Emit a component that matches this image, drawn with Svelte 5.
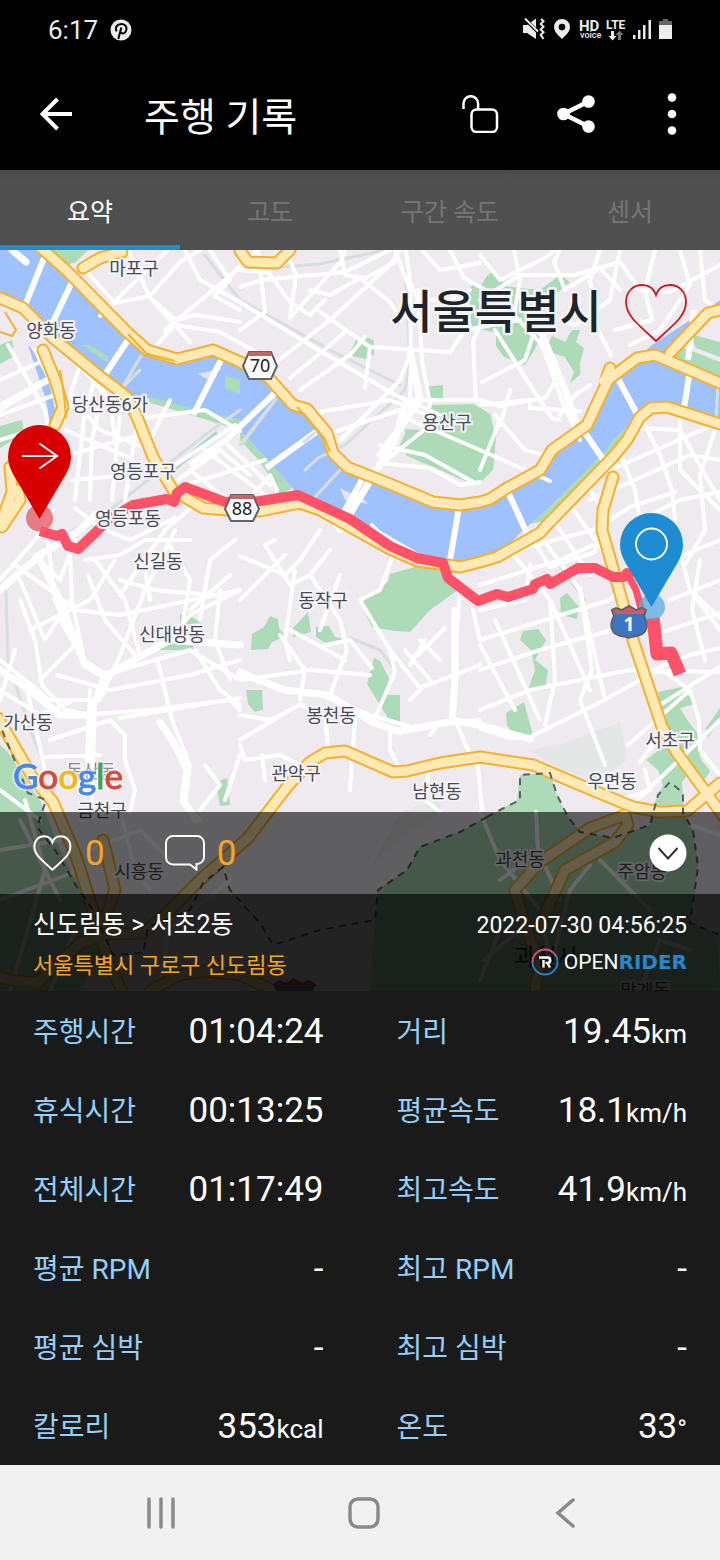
<script>
  const tabs = ['요약', '고도', '구간 속도', '센서'];
  let active = $state(0);

  const stats = [
    ['주행시간', '01:04:24', ''], ['거리', '19.45', 'km'],
    ['휴식시간', '00:13:25', ''], ['평균속도', '18.1', 'km/h'],
    ['전체시간', '01:17:49', ''], ['최고속도', '41.9', 'km/h'],
    ['평균 RPM', '-', ''], ['최고 RPM', '-', ''],
    ['평균 심박', '-', ''], ['최고 심박', '-', ''],
    ['칼로리', '353', 'kcal'], ['온도', '33', '°']
  ];

  const heart = 'M31 57C27 53 15 43 8 35C3 29 1 24 1 18C1 8 8 1 17 1C24 1 29 5 31 11C33 5 38 1 45 1C54 1 61 8 61 18C61 24 59 29 54 35C47 43 35 53 31 57Z';

  const places = [
    ['마포구', 134, 275], ['양화동', 51, 337], ['당산동6가', 110, 411], ['영등포구', 143, 478],
    ['영등포동', 128, 525], ['신길동', 158, 568], ['신대방동', 172, 641], ['동작구', 323, 607],
    ['용산구', 447, 429], ['봉천동', 331, 722], ['관악구', 296, 780], ['남현동', 437, 798],
    ['가산동', 28, 729], ['서초구', 670, 747], ['우면동', 612, 788], ['금천구', 102, 817],
    ['시흥동', 139, 878], ['과천동', 520, 866], ['주암동', 642, 878], ['막계동', 645, 997]
  ];

  const parks = [
    'M26 250H88L76 262L58 268ZM0 345L12 340L14 356L0 364ZM0 426L22 420L24 434L0 448Z',
    'M82 345L108 357L110 363L84 350ZM148 397L240 419V428L150 402ZM174 465L216 431L219 435L176 470Z',
    'M240 431L268 460L292 488L280 495L266 468L240 440Z',
    'M350 352L356 340L367 337L374 341L374 354L366 359L352 356ZM425 387L443 385V400L427 397Z',
    'M431 405L474 404L490 414L496 438L493 470L481 482L465 481L440 470L407 456L400 445L405 434L405 429L432 431Z',
    'M467 292L474 283L480 288L486 277L494 270L502 280L505 286L520 288L540 290L560 275L570 282L558 292L545 303L543 330L535 349L525 365L504 357L496 346L496 333L472 327Z',
    'M548 345L552 336L565 342L572 330L580 330L576 342L584 348L580 363L580 375L570 383L574 372L565 357L550 352Z',
    'M690 334L720 342V357L696 348ZM664 356L684 348L720 362V382Z',
    'M640 414L613 440L605 459L560 498L530 520L498 540L530 505L580 474Z',
    'M360 603L371 594L388 582L390 574L415 567L440 568L458 590L430 610L410 632L395 631L372 627Z',
    'M252 634L264 627L270 616L278 619L279 628L286 636L272 642L268 649L251 650ZM293 628L308 612L311 632L293 637ZM316 627L329 626L335 637L343 639L330 646L316 637Z',
    'M246 690H262L263 710L255 712L248 704ZM374 658L380 661L389 678L386 695L400 695L400 722L388 718L378 702L367 684Z',
    'M520 640L523 631L538 629L546 640L535 660L548 670L545 690L528 690L535 670L531 650ZM560 598L567 593L579 607L577 619L561 615ZM506 713L524 702L533 735L515 737L507 725Z',
    'M180 614L190 616L202 623L180 625ZM157 643L192 645L195 650L160 650ZM216 782L227 778L230 805L220 806Z',
    'M658 692L682 687L695 704L680 708L688 721L699 735L700 758L710 771L705 779L690 771L682 782L684 812L650 812L663 785L658 770L646 760L660 749L666 738Z',
    'M0 745L8 752L28 784L40 800L60 850L85 899L106 950L80 991L0 991Z',
    'M520 775L550 773L557 795L568 817L580 832L613 838L650 825L658 795L670 782L683 793L683 813L693 830L698 867L690 923L717 933L720 991L370 991L375 920L378 890L407 870L420 847L460 832L500 810L517 800Z',
    'M706 728L720 708V722L707 738Z'
  ];

  const streets = [
    'M88 273L115 303L150 296L180 262L200 250', 'M100 316L155 262L168 250', 'M128 250L150 298L176 320L196 315L240 322',
    'M152 300L190 342', 'M185 250L200 280L240 302L310 345L395 395L440 415', 'M210 250L230 280L214 296L240 310', 'M165 330L230 276L258 250',
    'M150 352L175 325L220 332L256 352', 'M240 287L262 280L345 272L390 250', 'M240 270L268 272L290 302L310 315L325 300', 'M258 250L265 312L240 330',
    'M286 250L296 275L290 318L342 260L345 250', 'M275 363L330 320L390 265L400 250', 'M300 390L350 355L365 337', 'M290 378L330 345L345 332',
    'M340 250L345 275L366 278L395 262', 'M310 290L330 295L360 278L390 302L400 318', 'M320 312L370 347L365 388',
    'M370 347L450 352L465 330L520 320', 'M340 441L400 380L412 350', 'M308 414L390 400L440 420', 'M328 434L400 410',
    'M395 250L410 290L411 360L410 405', 'M418 290L422 360L430 404L424 430L380 465', 'M406 250L410 282L418 300L450 300L470 290', 'M450 250L464 278L487 291L482 321L473 341L476 401', 'M422 250L440 270L480 263',
    'M410 420L480 450L550 481', 'M380 445L425 455L475 483', 'M380 463L430 468L460 485L480 482', 'M404 400H480L500 406L545 398L555 382',
    'M514 250L520 280L514 315L542 345L564 406L580 440', 'M538 320L525 360L482 382', 'M495 330L528 382L552 418L560 420',
    'M560 250L554 262L565 290L600 268L620 290', 'M480 255L500 280L545 258L555 250', 'M600 250L590 280L598 330L611 355', 'M620 250L610 300L575 325L560 320',
    'M480 300L520 275L575 275L620 262L640 290', 'M655 250L645 290L652 320L615 330', 'M680 250L690 285L660 330L630 345', 'M700 250L705 300L720 312', 'M640 290L670 292L720 265',
    'M480 405L530 400L530 408L580 411', 'M495 415L525 450L548 456M500 420L480 470', 'M510 390L500 425M560 415L575 395L590 385',
    'M621 455L635 490L640 520', 'M645 425L660 455L672 490L677 540L690 590L720 618', 'M610 470L720 422', 'M590 500L690 455L720 460', 'M630 428L680 430L705 475L720 500', 'M680 410L680 470L720 510', 'M715 430L700 475L705 530L685 565', 'M570 505L610 560M550 515L590 575', 'M530 535L550 567L595 552L600 530', 'M590 490L610 520L630 507L675 492',
    'M640 520L680 500L720 492', 'M670 600L720 580M660 565L720 540M660 633L720 613', 'M653 670L690 655L720 648M660 705L720 667', 'M690 590L720 630M700 560L692 610L705 660',
    'M480 565L525 548L600 528', 'M480 585L560 560L600 542', 'M510 550L550 600L590 690', 'M540 535L580 590L605 700', 'M480 610L525 600L530 565', 'M480 640L610 600L620 590', 'M480 670L540 650L630 625', 'M480 710L530 690L630 670L720 672', 'M480 728L510 738L530 737L595 705L640 680', 'M495 620L540 720M480 645L515 710', 'M550 600L555 680L545 725', 'M580 588L592 670L580 700L605 765',
    'M630 670L665 672L690 690L699 720L700 750L720 775', 'M630 807L700 740L720 720', 'M640 762L660 735M628 745L690 690M620 800L650 790L645 770',
    'M0 380L45 360M0 405L54 375M35 350L50 380L0 410', 'M8 345L45 410L48 425L0 440', 'M0 415L55 395L85 415', 'M82 360L70 395L100 430L150 450', 'M95 380L85 410L75 500', 'M75 360L110 400L115 440', 'M68 455L140 435M66 430L130 458M72 480L130 475', 'M105 380L92 440L90 500M120 410L112 500M136 430L125 500', 'M144 418L205 410L240 431', 'M160 475L235 425M150 440L170 400M178 480L220 450L250 475', 'M190 470L240 510M205 450L265 495M228 445L270 485', 'M186 485L265 460', 'M240 510L270 475L277 490',
    'M75 508L100 528L130 540L175 518', 'M0 580L38 536L53 510', 'M15 565L50 590L75 610L120 615L240 590', 'M35 555L60 580L75 540', 'M48 540L55 600L75 645L86 665L110 675L170 640L190 615L240 590', 'M20 600L35 640L42 685L65 710L90 715', 'M0 660L25 680L50 700L100 700L120 655L145 590L175 530', 'M70 550L72 600L84 660L105 675L155 660L190 650L240 680', 'M20 580L45 640L70 600', 'M85 560L120 555L145 540L190 540', 'M88 575L105 620L135 655L156 650', 'M95 560L125 600L140 655', 'M120 580L155 590L220 596', 'M120 595L165 530L200 500', 'M30 630L90 600L115 560', 'M40 680L75 645L60 620',
    'M57 675L110 690L190 675L240 660', 'M80 715L150 710L230 700L240 710', 'M120 718L240 698', 'M90 690L87 760M95 700L92 800', 'M110 720L125 735L125 760L135 790L130 812', 'M158 662L172 720L190 765L185 805L200 820', 'M195 650L220 690L240 705', 'M15 650L0 700M25 680L45 770M0 690L40 715L75 700', 'M45 757L100 755M50 740L110 720', 'M205 765L220 785L200 810M240 755L225 800', 'M220 590L215 640L230 680M190 610L230 575', 'M150 600L145 570L170 545L190 580L180 640', 'M200 620L210 560L235 540', 'M240 556L285 575L300 560L320 530', 'M275 540L265 545L290 585L310 575L330 550', 'M295 570L285 640L290 660', 'M240 600L285 555', 'M310 575L340 620L347 650L330 695', 'M340 575L320 630M240 680L310 670L370 675', 'M280 635L305 670L300 700M325 645L350 640L372 668M290 630L345 660', 'M328 698L370 715L415 728L480 720', 'M240 670L280 690L328 695', 'M240 715L270 720L300 705L350 720', 'M360 600L390 650L395 672L375 718', 'M390 650L420 688L480 665', 'M460 590L455 650L453 715L470 755', 'M473 610L480 640', 'M372 525L395 550L380 590L360 600', 'M375 530L430 562', 'M405 650L430 680M420 640L440 660M410 665L425 640', 'M418 655L445 628M410 700L425 685', 'M325 710L328 750M355 720L350 790M390 730L390 750L398 765', 'M240 740L290 710M240 745L245 760L280 755L300 765', 'M430 735L440 722', 'M262 755L265 780M430 763L425 800L440 812M478 765L482 812',
    'M80 820L120 810L135 870L150 890M90 850L140 830L170 860', 'M0 850L60 840M0 900L80 870M10 991L45 870L25 800M50 991L75 930M0 790L40 820M20 820L60 900', 'M480 812L500 860L540 910L550 960', 'M536 812L538 850L560 900M500 880L540 850M590 865L570 890L555 950', 'M690 825L720 835M600 860L650 910M483 960L520 930M480 980L500 930', 'M640 990L660 940L690 950M160 991L168 930L230 880'
  ];

  const avenues = [
    'M12 250L26 262M40 560L60 600L75 640L85 665L105 676L90 715L90 760', 'M0 670L30 690L60 715L85 715', 'M105 676L170 640L240 645', 'M240 673L285 690L328 695L372 722L400 732', 'M400 731L455 721L480 725L530 739',
    'M405 405L395 440L340 530', 'M455 610L455 680L452 720', 'M540 330L565 390L575 420', 'M380 455L420 400L410 350', 'M160 722L175 745L187 770L183 800L196 820', 'M0 590L40 555L80 530L95 515'
  ];

  const bridges = [
    'M44 258L24 308', 'M74 278L50 328', 'M128 340L100 382', 'M221 360L193 415', 'M276 392L226 440L190 465', 'M316 432L266 468', 'M362 480L335 528',
    'M459 507L450 560', 'M508 492L530 540', 'M583 430L605 462', 'M617 377L643 425', 'M690 370L684 408', 'M694 310L688 360'
  ];

  const highways = [
    'M83 268L100 258L122 252', 'M240 251L248 262L277 263L290 250', 'M43 350L56 382L63 407L55 425',
    'M10 467L12 492L0 525M18 490L20 500L2 527',
    'M0 298L23 308L53 338L97 374L127 397L137 417L153 457L173 490L203 508L227 510L260 511L300 503L320 510L390 549L417 561L447 565L460 567L480 562L497 557L540 533L547 525L613 457L627 440L640 417L651 408L667 407L720 424',
    'M40 247L67 271L127 332L147 350L177 359L213 350L240 362L268 377L293 405L307 409L327 433L333 453L347 467L390 484L433 502L460 505L480 502L490 499L507 488L540 470L552 450L587 425L608 380L637 358L655 355L720 383',
    'M670 353L708 313L720 310', 'M605 382L610 368',
    'M613 477L603 510L602 530L620 593L633 640L662 727L677 753L708 795L726 820',
    'M0 977L10 980L37 983L80 943L110 934L143 933L167 913L200 880L248 838L287 787L310 762L325 753L345 751L393 772L407 771L440 763L480 757L533 765L580 785L633 807L660 812L687 811L720 783',
    'M-2 718L33 778L53 802L75 853L93 910L110 967L123 993', 'M103 840L108 860L115 890L100 933', 'M150 991L180 975L205 971L240 975L275 991',
    'M535 990L540 965L525 925L515 890L540 862L590 828L625 815L628 825L615 842L565 870L540 925'
  ];

  const route = 'M40 531L57 536L62 534L68 546L78 549L98 530L108 520L133 505L167 499L174 502L177 493L185 487L225 502L260 501L298 495L350 519L390 546L417 558L443 563L448 578L478 601L497 594L508 597L533 589L535 584L547 579L550 584L578 568L595 568L613 577L624 577L627 573L632 578';
</script>

<div class="screen">
  <header>
    <div class="status">
      <div class="left">
        <span class="clock">6:17</span>
        <svg width="22" height="22" viewBox="0 0 22 22" aria-hidden="true">
          <circle cx="11" cy="11" r="10.5" fill="#ececec" />
          <path d="M6.6 12.4C4.600 8.300 7.200 5 11.300 5c3.500 0 5.500 2.200 5.200 5-.3 3-2.100 4.600-4 4.400-1.200-.1-1.800-.8-1.900-1.400M11.300 8.600L8.300 20" fill="none" stroke="#000" stroke-width="2" />
        </svg>
      </div>
      <svg width="152" height="26" viewBox="522 17 152 26" role="img" aria-label="HD voice LTE">
        <g fill="#ececec">
          <path d="M523 25H527L536 18.5V39L527 33H523Z" />
          <path d="M524 18L538 32" stroke="#000" stroke-width="3.6" />
          <path d="M525 18.5L538 31.5M541 19l2.500 2.300-2.800 2.700 2.800 2.700-2.800 2.800 2.800 2.700-2.800 2.700L543.500 39" fill="none" stroke="#ececec" stroke-width="2" />
          <path fill-rule="evenodd" d="M562 19a8 8 0 0 1 8 8c0 5-5 9-8 12c-3-3-8-7-8-12a8 8 0 0 1 8-8Zm0 4.800a3.300 3.300 0 1 0 0 6.600a3.300 3.300 0 0 0 0-6.600Z" />
          <text x="579" y="31" class="hd">HD</text>
          <text x="580" y="38" class="voice">voice</text>
          <text x="606" y="29" class="lte">LTE</text>
          <path d="M611 31h3v5h2.500l-4 4.500-4-4.500H611Z" />
          <path d="M618 40h3v-5h2.500l-4-4.500-4 4.500H618Z" fill="#777" />
          <path d="M633 35h2.500v4H633ZM638 30h2.500v9H638ZM643 25h2.500v14H643ZM648.500 20h2.500v19H648.500Z" />
          <path d="M663 19h5v2h4v4h-13v-4h4Z" fill="#666" />
          <path d="M659 25h13v14h-13Z" />
        </g>
      </svg>
    </div>
    <div class="appbar">
      <button aria-label="뒤로">
        <svg width="34" height="34" viewBox="0 0 34 34"><path d="M32 17H3M17.500 2L2.500 17L17.500 32" fill="none" stroke="#fff" stroke-width="4" /></svg>
      </button>
      <h1>주행 기록</h1>
      <div class="actions">
        <button aria-label="잠금 해제">
          <svg width="38" height="38" viewBox="0 0 38 38" fill="none" stroke="#fff" stroke-width="2.500"><path d="M2.500 14V8.500a7.300 7.300 0 0 1 14.600 0V14.500" /><rect x="10.500" y="14.500" width="25.500" height="22.500" rx="5" /></svg>
        </button>
        <button aria-label="공유">
          <svg width="38" height="38" viewBox="0 0 38 38" fill="#fff"><path d="M31.500 6.500L6.500 19L31.500 31.500" fill="none" stroke="#fff" stroke-width="4.500" /><circle cx="6.500" cy="19" r="6.300" /><circle cx="31.500" cy="6.500" r="6.300" /><circle cx="31.500" cy="31.500" r="6.300" /></svg>
        </button>
        <button aria-label="더보기">
          <svg width="10" height="44" viewBox="0 0 10 44" fill="#fff"><circle cx="5" cy="5.500" r="4.300" /><circle cx="5" cy="22" r="4.300" /><circle cx="5" cy="38.500" r="4.300" /></svg>
        </button>
      </div>
    </div>
  </header>

  <nav class="tabs" aria-label="기록">
    {#each tabs as tab, i}
      <button class:active={active === i} onclick={() => (active = i)}>{tab}</button>
    {/each}
  </nav>

  <main>
    <section class="mapwrap">
      <svg class="map" viewBox="0 250 720 741">
        <rect y="250" width="720" height="741" fill="#eeeaef" />
        <path d="M530 750L560 745L620 722L627 760L600 780L560 770ZM400 812L440 800L440 812L385 850L370 870Z" fill="#e5e6e6" />
        <g fill="#addbb8">{#each parks as d}<path {d} />{/each}</g>
        <path fill="#9fc2ff" d="M0 250H40L67 271L127 332L147 350L177 359L213 350L240 362L270 379L293 405L307 409L327 433L333 453L347 467L390 484L433 502L460 505L490 499L540 470L552 450L587 425L608 380L637 358L652 345L690 320L703 312L720 300V306L680 345L670 353L655 355L720 383V424L667 407L651 408L640 417L600 456L547 510L520 533L497 557L470 565L447 562L417 558L390 546L350 520L298 495L292 488L268 460L240 431L150 399L127 397L97 374L53 338L23 308L0 298Z" />
        <path d="M28 345L45 365L53 400L58 425L50 425L46 400Z" fill="#9fc2ff" />
        <path fill="#addbb8" d="M82 345L90 345L108 357L108 363ZM150 397L190 408L240 420V430L148 402ZM240 431L268 460L292 488L280 492L262 465ZM225 375L240 380V394L225 388ZM640 414L613 440L605 452L560 498L530 524L550 520L600 468Z" />
        <path d="M198 374L222 368L209 380ZM340 488L352 494L360 495L368 504L345 500Z" fill="#e4e2e8" />
        <g class="rail">
          <path d="M0 592L30 560L65 535L110 510L205 435L240 410" />
          <path d="M6 592L8 660L30 730L45 765" />
          <path d="M140 370L122 388M305 470L318 458L345 445L405 390L410 360L405 270M275 400L240 445" />
          <path d="M205 255L240 300L330 350L400 385M240 270L320 264L385 250" />
          <path d="M555 560L585 600M350 638L380 650L395 670" />
        </g>
        <g class="minor">{#each streets as d}<path {d} />{/each}</g>
        <g class="avenue">{#each avenues as d}<path {d} />{/each}</g>
        <g class="bridge">{#each bridges as d}<path {d} />{/each}</g>
        <path d="M141 356L122 388M318 430L304 442M340 470L315 497M276 399L242 444M718 385L716 418" class="rail" />
        <g class="casing">{#each highways as d}<path {d} />{/each}</g>
        <g class="highway">{#each highways as d}<path {d} />{/each}</g>
        <path d="M128 334L147 354L175 361M297 407L325 439L330 452M5 312L16 330L12 336L0 332M60 370L64 395L66 418" fill="none" stroke="#f5b02e" stroke-width="2" />
        <path d="M608 370L600 383L616 372" fill="none" stroke="#ffe9b4" stroke-width="5" />
        <path class="border" d="M487 817L500 810L520 800L520 775L550 773L557 795L568 817L580 832L613 838L650 825L658 795L670 782L683 793L683 813L693 830L698 867L690 923L720 935M487 817L460 832L420 847L407 870L378 890L375 920L320 930L273 945L260 923L230 890L223 867L203 883L190 910L148 927L143 953L113 955L93 910L77 887L57 853L37 827L46 800L28 793L0 725" />

        <circle cx="39.500" cy="518" r="13.500" fill="#e5555f" opacity=".75" />
        <path d={route} class="route" />
        <path d="M627 573L636 590L642 612" class="route thin" />
        <path d="M653 618L657 654L671 653L680 674" class="route thick" />
        <circle cx="652" cy="607" r="13" fill="#5ba8de" opacity=".75" />

        <g class="places">
          {#each places as [name, x, y]}<text {x} {y}>{name}</text>{/each}
          <text x="91" y="778" opacity=".6">독산동</text>
        </g>
        <text x="496" y="328" class="city">서울특별시</text>
        <text x="546" y="965" class="town">과천시</text>

        <g stroke="#5f6368" stroke-width="2">
          <path d="M243 366L249 352H271L277 366L271 379H249Z" fill="#fff" /><path d="M248 356L249 352H271L272 356Z" fill="#c86464" stroke="none" />
          <path d="M225 509L231 495H253L259 509L253 521H231Z" fill="#fff" /><path d="M230 499L231 495H253L254 499Z" fill="#c86464" stroke="none" />
        </g>
        <text x="260" y="372" class="shield">70</text>
        <text x="242" y="515" class="shield">88</text>
        <path d="M612 610L616 608L622 610L629 606L636 610L642 608L646 610L644 616C648 624 648 632 640 635C635 637 632 636 629 638C626 636 623 637 618 635C610 632 610 624 614 616Z" fill="#3b75c4" stroke="#5f6368" stroke-width="2" />
        <path d="M613 610L616 609L622 611L629 607L636 611L642 609L645 610L643 614H615Z" fill="#d05a5a" />
        <text x="629" y="631" class="one">1</text>
        <path d="M274 985L279 981L286 984L294 979L302 984L309 981L315 985L311 991H278Z" fill="#3b75c4" stroke="#5f6368" stroke-width="2" />
        <path d="M275 985L279 982L286 985L294 980L302 985L309 982L314 985L312 988H277Z" fill="#d05a5a" />

        <path d="M39.500 519L13 474C10 468 8 463 8 456.500a31.500 31.500 0 0 1 63 0C71 463 69 468 66 474Z" fill="#d80000" />
        <path d="M22 456H57M39.500 443.500L57 456L39.500 468.500" fill="none" stroke="#fff" stroke-width="2" />
        <path d="M651.500 607L625 562C622 556 620 551 620 544.500a31.500 31.500 0 0 1 63 0C683 551 681 556 678 562Z" fill="#1d8cd2" />
        <circle cx="651.500" cy="544" r="15.500" fill="none" stroke="#fff" stroke-width="1.800" />

        <text x="13" y="789" class="google"><tspan fill="#4a86ec" stroke="#4a86ec">G</tspan><tspan fill="#dc483c" stroke="#dc483c">o</tspan><tspan fill="#f2b61f" stroke="#f2b61f">o</tspan><tspan fill="#4a86ec" stroke="#4a86ec">g</tspan><tspan fill="#3fa35c" stroke="#3fa35c">l</tspan><tspan fill="#dc483c" stroke="#dc483c">e</tspan></text>
      </svg>

      <button class="favorite" aria-label="즐겨찾기">
        <svg width="62" height="58" viewBox="0 0 62 58"><path d={heart} fill="none" stroke="#c8191e" stroke-width="1.800" /></svg>
      </button>

      <div class="overlay">
        <div class="social">
          <button aria-label="좋아요">
            <svg width="40" height="36" viewBox="0 -1 64 60"><path d={heart} fill="none" stroke="#fff" stroke-width="3.200" /></svg>
            <span>0</span>
          </button>
          <button aria-label="댓글">
            <svg width="40" height="36" viewBox="0 0 40 36"><path d="M8 1H32a7 7 0 0 1 7 7V22a7 7 0 0 1-7 7H31.500V34.500L25 29.500H8a7 7 0 0 1-7-7V8a7 7 0 0 1 7-7Z" fill="none" stroke="#fff" stroke-width="1.900" /></svg>
            <span>0</span>
          </button>
          <button class="more" aria-label="접기">
            <svg width="38" height="38" viewBox="0 0 38 38"><circle cx="19" cy="19" r="18.500" fill="#fff" /><path d="M9.500 14L19 24.500L28.500 14" fill="none" stroke="#333" stroke-width="2" /></svg>
          </button>
        </div>
        <div class="info">
          <div>
            <h2>신도림동 &gt; 서초2동</h2>
            <p class="address">서울특별시 구로구 신도림동</p>
          </div>
          <div class="right">
            <time>2022-07-30 04:56:25</time>
            <p class="brand">
              <svg width="28" height="28" viewBox="0 0 28 28" fill="none"><circle cx="14" cy="14" r="12.500" stroke="#2389cc" stroke-width="1.800" /><path d="M1.500 14A12.500 12.500 0 0 1 25 8" stroke="#e0445e" stroke-width="1.800" /><path d="M8 9.500H16.500a2.700 2.700 0 0 1 0 5.400H14.500M16 14.500L19 19.500M12.500 12V19.500" stroke="#fff" stroke-width="2.400" /></svg>
              <span>OPEN</span><b>RIDER</b>
            </p>
          </div>
        </div>
      </div>
    </section>

    <dl class="stats">
      {#each stats as [label, value, unit]}
        <div>
          <dt>{label}</dt>
          <dd>{value}<small>{unit}</small></dd>
        </div>
      {/each}
    </dl>
  </main>

  <nav class="system" aria-label="시스템">
    <button aria-label="최근 앱"><svg width="32" height="32" viewBox="0 0 32 32"><path d="M3 2V30M15 2V30M27 2V30" stroke="#8a8a8a" stroke-width="3.500" stroke-linecap="round" /></svg></button>
    <button aria-label="홈"><svg width="34" height="34" viewBox="0 0 34 34"><rect x="3" y="3" width="28" height="28" rx="8" fill="none" stroke="#8a8a8a" stroke-width="3.500" /></svg></button>
    <button aria-label="뒤로 가기"><svg width="32" height="32" viewBox="0 0 32 32"><path d="M23 3L8 16L23 29" fill="none" stroke="#8a8a8a" stroke-width="3.500" stroke-linecap="round" /></svg></button>
  </nav>
</div>

<style>
  :global(body) { margin: 0; background: #1a1a1a; }
  .screen {
    display: flex;
    flex-direction: column;
    min-height: 100vh;
    font-family: Roboto, 'Noto Sans CJK KR', sans-serif;
    color: #fff;
  }
  button { padding: 0; border: 0; background: none; color: inherit; font: inherit; cursor: pointer; }
  svg { display: block; }
  h1, h2, p, dl, dd { margin: 0; font-weight: 400; }

  header { background: #000; }
  .status { display: flex; justify-content: space-between; align-items: center; height: 60px; padding: 0 46px 0 48px; }
  .left { display: flex; align-items: center; gap: 12px; }
  .clock { font-size: 26px; line-height: 30px; color: #ececec; }
  .hd { font: 700 15px Roboto, sans-serif; }
  .voice { font: 500 9px Roboto, sans-serif; }
  .lte { font: 700 12px Roboto, sans-serif; }
  .appbar { display: flex; align-items: center; height: 110px; padding: 0 43px 0 40px; box-sizing: border-box; }
  .appbar > button, .actions { margin-bottom: 2px; }
  h1 { margin-left: 70px; padding-top: 6px; font-size: 39px; line-height: 56px; }
  .actions { display: flex; align-items: center; gap: 58px; margin-left: auto; }
  .actions button:last-child { margin-left: 14px; }

  .tabs { display: grid; grid-template-columns: repeat(4, 1fr); height: 80px; background: linear-gradient(#474747, #505050 8px); }
  .tabs button { border-top: 5px solid transparent; border-bottom: 5px solid transparent; font-size: 25px; color: #757575; }
  .tabs .active { border-bottom-color: #1d8cd2; color: #fff; }

  .mapwrap { position: relative; display: grid; }
  .map, .overlay { grid-area: 1 / 1; }
  .map { width: 100%; height: auto; }
  .overlay { align-self: end; }
  .minor, .avenue, .bridge, .casing, .highway, .rail { fill: none; stroke: #fff; stroke-linejoin: round; stroke-linecap: round; }
  .minor { stroke-width: 4px; }
  .avenue { stroke-width: 7px; }
  .bridge { stroke-width: 6px; stroke-linecap: butt; }
  .rail { stroke: #d8dde1; stroke-width: 3px; }
  .casing { stroke: #f5b02e; stroke-width: 13px; }
  .highway { stroke: #ffe9b4; stroke-width: 9px; }
  .border { fill: none; stroke: #5a6068; stroke-width: 2px; stroke-dasharray: 7 6; }
  .route { fill: none; stroke: #ff5268; stroke-width: 10px; stroke-linejoin: round; }
  .route.thin { stroke-width: 7px; }
  .route.thick { stroke-width: 13px; }
  .places { font-size: 18px; text-anchor: middle; fill: #464b54; stroke: #f6f4f8; stroke-width: 4px; paint-order: stroke; stroke-linejoin: round; }
  .city { font-size: 46px; font-weight: 500; text-anchor: middle; fill: #202329; stroke: #f4f5f7; stroke-width: 5px; paint-order: stroke; stroke-linejoin: round; }
  .town { font-size: 23px; text-anchor: middle; fill: #202329; }
  .shield { font-family: 'Noto Sans', sans-serif; font-size: 18px; text-anchor: middle; fill: #222; }
  .one { font: 700 19px 'Noto Sans', sans-serif; text-anchor: middle; fill: #fff; }
  .google { font: 400 35px Lato, sans-serif; stroke-width: 1px; filter: drop-shadow(0 0 1px #fff) drop-shadow(0 0 1px #fff); }
  .favorite { position: absolute; top: 34px; right: 33px; }

  .social { display: flex; align-items: center; gap: 60px; height: 82px; padding: 0 33px; background: rgba(0, 0, 0, 0.6); }
  .social button { display: flex; align-items: center; gap: 12px; font-size: 35px; line-height: 40px; color: #f5a623; }
  .social span { padding-top: 2px; }
  .social .more { margin-left: auto; }
  .info { display: flex; justify-content: space-between; height: 97px; padding: 13px 33px 0; box-sizing: border-box; background: rgba(0, 0, 0, 0.85); }
  h2 { font-size: 25px; line-height: 36px; }
  .address { font-size: 22px; line-height: 46px; color: #f5a623; }
  .right { display: flex; flex-direction: column; align-items: flex-end; }
  time { font-size: 23px; line-height: 38px; }
  .brand { display: flex; align-items: center; height: 34px; font-size: 21px; line-height: 28px; }
  .brand svg { margin-right: 5px; }
  .brand b { font-family: 'DejaVu Sans', sans-serif; font-size: 20px; color: #2389cc; }

  .stats { display: grid; grid-template-columns: 1fr 1fr; column-gap: 73px; padding: 0 33px; background: #1a1a1a; }
  .stats div { display: flex; justify-content: space-between; align-items: center; height: 79px; padding-top: 4px; box-sizing: border-box; }
  dt { font-size: 28px; line-height: 40px; color: #93d0fa; }
  dd { font-size: 35px; line-height: 40px; }
  small { font-size: 26px; }

  .system { display: flex; flex: 1; align-items: center; justify-content: space-between; min-height: 95px; padding: 0 138px 0 146px; background: #f1f1f1; }
</style>
